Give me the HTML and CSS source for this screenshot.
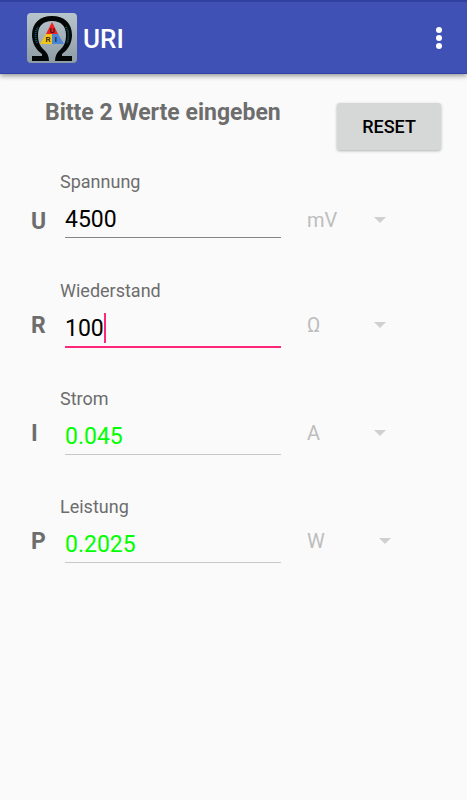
FILE: index.html
```html
<!DOCTYPE html>
<html lang="de">
<head>
<meta charset="utf-8">
<meta name="viewport" content="width=device-width, initial-scale=1">
<title>URI</title>
<link rel="stylesheet" href="styles.css">
</head>
<body>
<header class="app-bar">
  <svg class="logo" viewBox="0 0 50 50" aria-hidden="true">
    <defs>
      <linearGradient id="plate" x1="0" y1="0" x2="0" y2="1">
        <stop offset="0" stop-color="#b9c5cc"/>
        <stop offset="1" stop-color="#8d9ba2"/>
      </linearGradient>
    </defs>
    <rect width="50" height="50" rx="4" fill="url(#plate)"/>
    <path d="M5 43 H15 V41 C9 37 5 30 5 22 C5 10 13 3 25 3 C37 3 45 10 45 22 C45 30 41 37 35 41 V43 H45 V48 H28 C28 43 30 39 34 36 C37 33 39 29 39 22 C39 13 34 8 25 8 C16 8 11 13 11 22 C11 29 13 33 16 36 C20 39 22 43 22 48 H5 Z" fill="#030607"/>
    <path d="M25 9 L19 21 H31 Z" fill="#ed2024"/>
    <path d="M19 21 H25 V31 H13 Z" fill="#f2c51c"/>
    <path d="M25 21 H31 L37 31 H25 Z" fill="#4a84d4"/>
    <g class="logo-letters">
      <text x="25" y="20">U</text>
      <text x="21" y="29">R</text>
      <text x="29" y="29">I</text>
    </g>
    <g fill="none" stroke="#12606c" stroke-width="2" stroke-dasharray="1 1">
      <path d="M10 30 C8 25 8 19 11 14"/>
      <path d="M39 14 C42 19 42 25 40 30"/>
    </g>
  </svg>
  <h1 class="app-title">URI</h1>
  <button class="menu-button" type="button" aria-label="Menü">
    <svg viewBox="0 0 6 22" aria-hidden="true"><circle cx="3" cy="3" r="3"/><circle cx="3" cy="11" r="3"/><circle cx="3" cy="19" r="3"/></svg>
  </button>
</header>
<main>
  <form class="calculator">
    <div class="intro">
      <h2 class="prompt">Bitte 2 Werte eingeben</h2>
      <button class="reset" type="button">RESET</button>
    </div>

    <div class="row row-first">
      <label class="name" for="u">Spannung</label>
      <span class="symbol">U</span>
      <div class="entry"><input class="value" id="u" type="text" inputmode="decimal" value="4500"></div>
      <div class="unit">
        <select aria-label="Einheit Spannung" disabled><option>mV</option></select>
        <svg class="arrow" viewBox="0 0 12 6" aria-hidden="true"><path d="M0 0H12L6 6Z"/></svg>
      </div>
    </div>

    <div class="row">
      <label class="name" for="r">Wiederstand</label>
      <span class="symbol">R</span>
      <div class="entry"><input class="value active" id="r" type="text" inputmode="decimal" value="100"><span class="caret"></span></div>
      <div class="unit">
        <select aria-label="Einheit Wiederstand" disabled><option>Ω</option></select>
        <svg class="arrow" viewBox="0 0 12 6" aria-hidden="true"><path d="M0 0H12L6 6Z"/></svg>
      </div>
    </div>

    <div class="row">
      <label class="name" for="i">Strom</label>
      <span class="symbol">I</span>
      <div class="entry"><input class="value result" id="i" type="text" value="0.045" disabled></div>
      <div class="unit">
        <select aria-label="Einheit Strom" disabled><option>A</option></select>
        <svg class="arrow" viewBox="0 0 12 6" aria-hidden="true"><path d="M0 0H12L6 6Z"/></svg>
      </div>
    </div>

    <div class="row">
      <label class="name" for="p">Leistung</label>
      <span class="symbol">P</span>
      <div class="entry"><input class="value result" id="p" type="text" value="0.2025" disabled></div>
      <div class="unit unit-wide">
        <select aria-label="Einheit Leistung" disabled><option>W</option></select>
        <svg class="arrow" viewBox="0 0 12 6" aria-hidden="true"><path d="M0 0H12L6 6Z"/></svg>
      </div>
    </div>
  </form>
</main>
</body>
</html>
```
FILE: styles.css
```css
* {
  box-sizing: border-box;
}

body {
  margin: 0;
  min-height: 100vh;
  background: #fafafa;
  color: #6d6d6d;
  font-family: Roboto, "Liberation Sans", sans-serif;
}

button,
input,
select {
  font-family: inherit;
}

.app-bar {
  display: flex;
  align-items: center;
  height: 74px;
  padding: 0 23px 0 27px;
  background: #3f51b5;
  border-top: 2px solid #3040a0;
  border-bottom: 1px solid #3040a8;
  box-shadow: 0 2px 5px rgba(0, 0, 0, 0.4);
}

.logo {
  width: 50px;
  height: 50px;
}

.logo-letters {
  fill: #19130c;
  font-size: 8px;
  font-weight: 500;
  text-anchor: middle;
}

.app-title {
  margin: 0 auto 0 6px;
  padding-top: 2px;
  color: #fff;
  font-size: 26px;
  font-weight: 500;
  line-height: 32px;
}

.menu-button {
  display: flex;
  padding: 8px 2px;
  border: 0;
  background: none;
}

.menu-button svg {
  width: 6px;
  height: 22px;
  fill: #fff;
}

.intro {
  display: flex;
  justify-content: space-between;
  align-items: flex-start;
  height: 95px;
  padding: 24px 26px 0 45px;
}

.prompt {
  margin: 0;
  font-size: 23px;
  font-weight: 700;
  line-height: 30px;
}

.reset {
  width: 104px;
  height: 47px;
  margin-top: 5px;
  border: 0;
  border-radius: 3px;
  background: #d6d7d7;
  box-shadow: 0 1px 3px rgba(0, 0, 0, 0.3);
  color: #000;
  font-size: 18px;
  font-weight: 500;
}

.row {
  display: grid;
  grid-template-columns: 29px 5px minmax(0, 216fr) 26px minmax(0, 160fr);
  grid-template-rows: 26px 44px;
  height: 109px;
  padding-left: 31px;
}

.row + .row {
  height: 108px;
}

.name {
  grid-area: 1 / 2 / 2 / 6;
  font-size: 18px;
  line-height: 26px;
}

.symbol {
  grid-area: 2 / 1;
  font-size: 23px;
  font-weight: 700;
  line-height: 44px;
}

.entry {
  position: relative;
  grid-area: 2 / 3;
}

.value {
  width: 100%;
  height: 43px;
  padding: 7px 0 0;
  border: 0;
  border-bottom: 1px solid #858585;
  border-radius: 0;
  outline: 0;
  background: none;
  color: #000;
  font-size: 23px;
}

.value.active {
  height: 44px;
  border-bottom: 2px solid #ff2878;
}

.value.result {
  border-color: #c8c8c8;
  color: #00ff00;
}

.caret {
  position: absolute;
  top: 9px;
  left: 39px;
  width: 2px;
  height: 30px;
  background: #ff2878;
}

.unit {
  display: flex;
  align-items: center;
  grid-area: 2 / 5;
  height: 41px;
}

.unit select {
  width: 67px;
  padding: 0;
  border: 0;
  appearance: none;
  background: none;
  color: #bdbdbd;
  font-size: 20px;
  opacity: 1;
}

.unit-wide select {
  width: 72px;
}

.arrow {
  width: 12px;
  height: 6px;
  fill: #d0d0d0;
}

.row-first .symbol {
  line-height: 54px;
}

.row-first .unit {
  height: 50px;
}
```
